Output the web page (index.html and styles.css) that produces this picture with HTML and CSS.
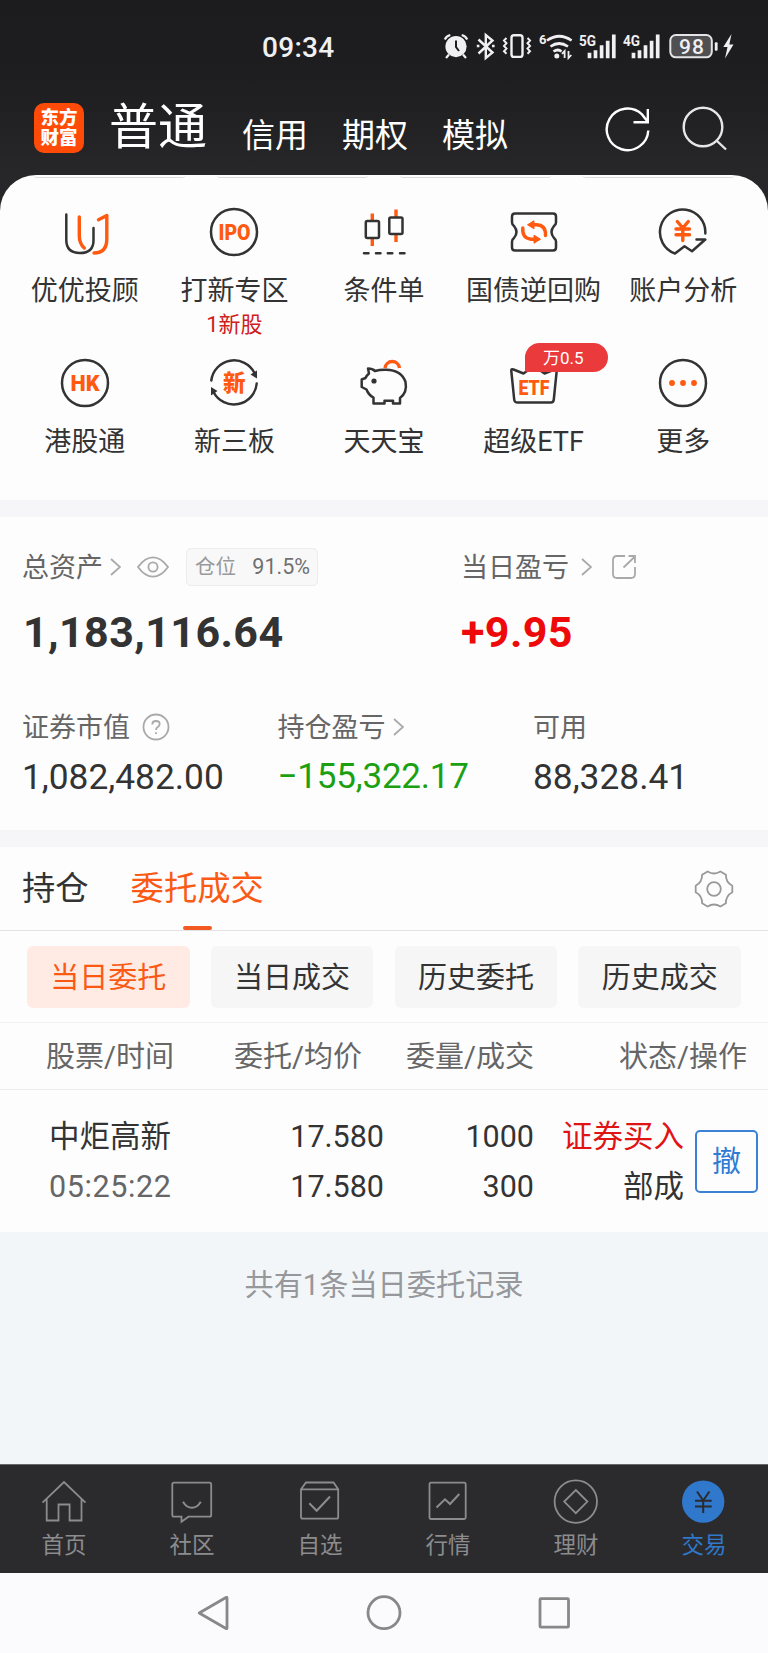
FILE: index.html
```html
<!DOCTYPE html>
<html lang="zh-CN">
<head>
    <meta charset="UTF-8">
    <meta name="viewport" content="width=device-width, initial-scale=1.0">
    <title>交易</title>
    <link rel="stylesheet" href="styles.css">
</head>
<body>
    <div class="top">
        <div class="status-bar">
            <span class="time">09:34</span>
            <svg class="status-icons" width="300" height="32" viewBox="0 0 300 32">
                <!-- alarm -->
                <circle cx="16" cy="16.6" r="10.6" fill="#f0f0f2"/>
                <path d="M16 10.5v6.5l3 4" stroke="#1d1d1f" stroke-width="2" fill="none"/>
                <path d="M4.8 9.5q1.5-3.5 5.5-4.5M27.2 9.5q-1.5-3.5-5.5-4.5M9 24.5l-3 3.4M23 24.5l3 3.4" class="st" stroke-width="2.2"/>
                <!-- bluetooth -->
                <path d="M38.5 9.5l14 13-6.7 5.5v-23l6.7 5.5-14 13M36.8 16h2.6M52 16h2.6" class="st" stroke-width="2.4"/>
                <!-- vibrate -->
                <rect x="71.5" y="5.3" width="11" height="21.6" rx="2.5" class="st" stroke-width="2.4"/>
                <path d="M66.5 8l-2.5 2.5 2.5 2.7-2.5 2.7 2.5 2.7-2.5 2.7 2.5 2.5M87.5 8l2.5 2.5-2.5 2.7 2.5 2.7-2.5 2.7 2.5 2.7-2.5 2.5" class="st" stroke-width="2"/>
                <!-- wifi -->
                <text x="99" y="14" font-size="13" class="stx bold">6</text>
                <path d="M107 10.5q12.3-8.5 24.6 0M110.5 16.5q8.5-6 17.5 0M113.5 21.5q4.5-3 8 0" class="st" stroke-width="2.7"/>
                <circle cx="116.8" cy="26" r="2.5" fill="#f0f0f2"/>
                <path d="M124.6 28v-7l-2.6 2.8M128.5 21v7l2.8-3" class="st" stroke-width="1.8"/>
                <!-- signals -->
                <text x="139" y="16" font-size="15.5" textLength="17" lengthAdjust="spacingAndGlyphs" class="stx bold">5G</text>
                <path d="M149.5 28.3v-5.5M155.5 28.3v-8M161.6 28.3v-13M167.7 28.3v-17.5M173.8 28.3V4.5" stroke="#f0f0f2" stroke-width="3.7"/>
                <text x="183" y="16" font-size="15.5" textLength="17" lengthAdjust="spacingAndGlyphs" class="stx bold">4G</text>
                <path d="M193.5 28.3v-5.5M199.5 28.3v-8M205.5 28.3v-13M211.6 28.3v-17.5M217.7 28.3V4.5" stroke="#f0f0f2" stroke-width="3.7"/>
                <!-- battery -->
                <rect x="230.3" y="5" width="41.5" height="22.3" rx="5.5" fill="#505052" stroke="#e4e4e6" stroke-width="2"/>
                <text x="239" y="23.5" font-size="21" textLength="25" class="stx">98</text>
                <rect x="274.8" y="12.3" width="2.8" height="8.5" rx="1" fill="#f0f0f2"/>
                <path d="M291.5 4l-8.2 13h4.2l-2.5 11.5 8.5-14h-4.2z" fill="#f0f0f2"/>
            </svg>
        </div>
        <div class="header">
            <div class="logo"><span>东方</span><span>财富</span></div>
            <div class="account-tabs">
                <span class="active">普通</span>
                <span>信用</span>
                <span>期权</span>
                <span>模拟</span>
            </div>
            <svg class="refresh" width="48" height="48" viewBox="0 0 48 48" fill="none" stroke="#fff" stroke-width="2.4">
                <path d="M45.3 25.5A20.8 20.8 0 1 1 39 9.4L44.5 16.5M44.8 4v13.3h-14.3"/>
            </svg>
            <svg class="search" width="48" height="48" viewBox="0 0 48 48" fill="none" stroke="#e6e6e6" stroke-width="2.4">
                <circle cx="22" cy="21" r="19.3"/>
                <path d="M35.5 34.5l9.5 9"/>
            </svg>
        </div>
    </div>

    <div class="menu">
        <div class="menu-edge"><i></i><i></i><i></i><i></i></div>
        <div class="menu-grid">
            <div class="menu-item">
                <svg class="icon" viewBox="0 0 50 50">
                    <path class="dk" d="M6.3 7.5V33Q6.3 46 20 46T33.5 33V21"/>
                    <path class="og" d="M19.3 10V29Q19.3 36.5 24.3 41M38.5 12.7L46.8 8.5V32Q46.8 46 34 46"/>
                </svg>
                <span class="label">优优投顾</span>
            </div>
            <div class="menu-item">
                <svg class="icon" viewBox="0 0 50 50">
                    <circle class="dk" cx="25" cy="25" r="23"/>
                    <text x="9.5" y="33" font-size="22" textLength="32" lengthAdjust="spacingAndGlyphs" class="icon-text">IPO</text>
                </svg>
                <span class="label">打新专区</span>
                <span class="note">1新股</span>
            </div>
            <div class="menu-item">
                <svg class="icon" viewBox="0 0 50 50">
                    <path class="og wick" d="M13.3 6.5v7M13.3 31.5v7.5M37 2.5v7.5M37 27.5v7.5"/>
                    <rect class="dk" x="6.8" y="14" width="13.2" height="17" rx="1.5"/>
                    <rect class="dk" x="30.3" y="10.5" width="13.2" height="16.5" rx="1.5"/>
                    <path class="dk" d="M5 46.2h4.5M17 46.2h4.5M28.8 46.2h4.5M41 46.2h4.5"/>
                </svg>
                <span class="label">条件单</span>
            </div>
            <div class="menu-item">
                <svg class="icon" viewBox="0 0 50 50">
                    <path class="dk" d="M6 6.5H44Q47 6.5 47 9.5V15.5Q47 17.5 45 19Q40 25 45 31Q47 32.5 47 34.5V40.5Q47 43.5 44 43.5H6Q3 43.5 3 40.5V34.5Q3 32.5 5 31Q10 25 5 19Q3 17.5 3 15.5V9.5Q3 6.5 6 6.5Z"/>
                    <path class="og" d="M24.5 17.8H28Q37 18.5 36.5 28.5M13.8 21Q13 31.2 22 32.2H25"/>
                    <path fill="#ff5a10" stroke="#ff5a10" stroke-linejoin="round" d="M18.5 17.8L25 13.8V21.8ZM31.5 32.2L25 28.2V36.2Z"/>
                </svg>
                <span class="label">国债逆回购</span>
            </div>
            <div class="menu-item">
                <svg class="icon" viewBox="0 0 50 50">
                    <path class="dk" d="M47.3 26.5A22.7 22.7 0 1 0 17 46.5L26.5 39.3L34 44.3L47.3 32.5H38.5"/>
                    <path class="og" d="M19.3 14.5L24.8 21L30.3 14.5M18 22H31.5M18 27.8H31.5M24.8 21V33.5"/>
                </svg>
                <span class="label">账户分析</span>
            </div>
            <div class="menu-item">
                <svg class="icon" viewBox="0 0 50 50">
                    <circle class="dk" cx="25" cy="25" r="23"/>
                    <text x="10.5" y="32.8" font-size="21.5" textLength="29" lengthAdjust="spacingAndGlyphs" class="icon-text">HK</text>
                </svg>
                <span class="label">港股通</span>
            </div>
            <div class="menu-item">
                <svg class="icon" viewBox="0 0 50 50">
                    <path class="dk" d="M2.3 22.5A22.9 22.9 0 0 1 45.5 15M47.7 25.5A22.9 22.9 0 0 1 4.5 34"/>
                    <path fill="#333" d="M41.5 16.5L48 12.5L48 20.5ZM8.5 33L2 37.5L2 29Z"/>
                    <text x="14" y="32.8" font-size="22.5" class="icon-text">新</text>
                </svg>
                <span class="label">新三板</span>
            </div>
            <div class="menu-item">
                <svg class="icon" viewBox="0 0 50 50">
                    <path class="og arc" d="M26 10A7.3 7.3 0 0 1 40.5 10"/>
                    <path class="dk" d="M9 10.5Q13.5 10.5 16 13Q21 11.5 27 11.7Q42.5 12 46.5 24Q48.5 34.5 41 40V45.5H34V42.8H25.5V45.5H14.5V39.5Q9.5 37 7.5 31.5L2.7 29V21.5L6.5 20Q7.5 17.5 10 15.5Z"/>
                    <circle cx="15" cy="23" r="2.6" fill="#333"/>
                </svg>
                <span class="label">天天宝</span>
            </div>
            <div class="menu-item">
                <svg class="icon" viewBox="0 0 50 50">
                    <path class="dk" d="M2.3 13Q2 10.5 4.5 11.5L14.5 15.5L25 8L35.5 15.5L45.5 11.5Q48 10.5 47.7 13L44.8 41.5Q44.5 44.5 42 44.5H8Q5.5 44.5 5.2 41.5Z"/>
                    <text x="9.5" y="37" font-size="21" textLength="31" lengthAdjust="spacingAndGlyphs" class="icon-text">ETF</text>
                </svg>
                <span class="badge">万0.5</span>
                <span class="label">超级ETF</span>
            </div>
            <div class="menu-item">
                <svg class="icon" viewBox="0 0 50 50">
                    <circle class="dk" cx="25" cy="25" r="23"/>
                    <g fill="#ff5a10"><circle cx="14" cy="25" r="2.9"/><circle cx="25" cy="25" r="2.9"/><circle cx="36" cy="25" r="2.9"/></g>
                </svg>
                <span class="label">更多</span>
            </div>
        </div>
    </div>

    <div class="assets">
        <div class="asset-row total">
            <div class="asset">
                <div class="asset-label"><span>总资产</span>
                    <svg class="chevron" viewBox="0 0 11 18"><path d="M1 1l9 8-9 8"/></svg>
                    <svg class="eye" width="32" height="22" viewBox="0 0 32 22"><path d="M1 11Q8 1.3 16 1.3T31 11Q24 20.7 16 20.7T1 11Z"/><circle cx="16" cy="11" r="4.6"/></svg>
                    <div class="ratio">仓位<b>91.5%</b></div>
                </div>
                <div class="big">1,183,116.64</div>
            </div>
            <div class="asset">
                <div class="asset-label"><span>当日盈亏</span>
                    <svg class="chevron far" viewBox="0 0 11 18"><path d="M1 1l9 8-9 8"/></svg>
                    <svg class="share" width="24" height="24" viewBox="0 0 24 24"><path d="M13 1H5Q1 1 1 5V19Q1 23 5 23H19Q23 23 23 19V12M11.5 12.5L23 1.5M16.5 1H23V8"/></svg>
                </div>
                <div class="big up">+9.95</div>
            </div>
        </div>
        <div class="asset-row detail">
            <div class="asset">
                <div class="asset-label"><span>证券市值</span>
                    <svg class="help" width="28" height="28" viewBox="0 0 28 28"><circle cx="14" cy="14" r="12.5"/><path d="M10.3 11.5Q10.3 8 14 8T17.7 11Q17.7 12.8 15.8 14T14 17M14 19.3V21"/></svg>
                </div>
                <div class="num">1,082,482.00</div>
            </div>
            <div class="asset">
                <div class="asset-label"><span>持仓盈亏</span>
                    <svg class="chevron" viewBox="0 0 11 18"><path d="M1 1l9 8-9 8"/></svg>
                </div>
                <div class="num down">−155,322.17</div>
            </div>
            <div class="asset">
                <div class="asset-label"><span>可用</span></div>
                <div class="num">88,328.41</div>
            </div>
        </div>
    </div>

    <div class="orders">
        <div class="tabs">
            <span class="tab">持仓</span>
            <span class="tab active">委托成交</span>
            <svg class="gear" width="40" height="40" viewBox="-20 -20 40 40">
                <path d="M18.3 -3.2V3.2Q11.7 6.75 11.9 14.2L6.4 17.5Q0 13.5 -6.4 17.5L-11.9 14.2Q-11.7 6.75 -18.3 3.2V-3.2Q-11.7 -6.75 -11.9 -14.2L-6.4 -17.5Q0 -13.5 6.4 -17.5L11.9 -14.2Q11.7 -6.75 18.3 -3.2Z"/>
                <circle r="6.8"/>
            </svg>
        </div>
        <div class="filters">
            <span class="filter active">当日委托</span>
            <span class="filter">当日成交</span>
            <span class="filter">历史委托</span>
            <span class="filter">历史成交</span>
        </div>
        <div class="table-head">
            <span>股票/时间</span>
            <span>委托/均价</span>
            <span>委量/成交</span>
            <span>状态/操作</span>
        </div>
        <div class="order">
            <div class="cell name">中炬高新<small>05:25:22</small></div>
            <div class="cell">17.580<small>17.580</small></div>
            <div class="cell">1000<small>300</small></div>
            <div class="cell buy">证券买入<small>部成</small></div>
            <div class="cancel">撤</div>
        </div>
    </div>

    <div class="summary">共有1条当日委托记录</div>

    <div class="nav">
        <div class="nav-item">
            <svg viewBox="0 0 44 44"><path d="M0.5 22.7L22 2L43.5 22.7M4.7 19V40.5H16.5V24.5H27.6V40.5H39.5V19"/></svg>
            首页
        </div>
        <div class="nav-item">
            <svg viewBox="0 0 44 44"><path d="M4 2.7H39.5Q41.2 2.7 41.2 4.5V35Q41.2 36.7 39.5 36.7H18.5L11.5 41.7V36.7H4Q2.3 36.7 2.3 35V4.5Q2.3 2.7 4 2.7Z"/><path class="thick" d="M13 21.7Q16.5 27.7 21.9 27.7T30.8 21.7"/></svg>
            社区
        </div>
        <div class="nav-item">
            <svg viewBox="0 0 44 44"><path d="M3 9.3L8 2.5H35.5L40.2 9.3V37Q40.2 38.7 38.5 38.7H4.7Q3 38.7 3 37ZM3 9.3H40.2"/><path class="thick" d="M11.3 23.3L18.7 30.7L32 16.5"/></svg>
            自选
        </div>
        <div class="nav-item">
            <svg viewBox="0 0 44 44"><rect x="3.5" y="2.7" width="36.2" height="36.3" rx="1.5"/><path class="thick" d="M10.5 27.5L19 19.3L24 24L33.3 14"/></svg>
            行情
        </div>
        <div class="nav-item">
            <svg viewBox="0 0 44 44"><circle cx="21.8" cy="21.6" r="21.2"/><path d="M21.8 10L33.4 21.6L21.8 33.2L10.2 21.6Z"/></svg>
            理财
        </div>
        <div class="nav-item active">
            <svg viewBox="0 0 44 44"><circle cx="21.2" cy="21.6" r="21.2" class="coin"/><path d="M15 11.5L21.2 20.5L27.4 11.5M13 20.7H29.7M13 26.5H29.7M21.2 20.5V33"/></svg>
            交易
        </div>
    </div>

    <div class="system-bar">
        <svg viewBox="0 0 40 40"><path d="M6.2 20L33 4.5Q34 4 34 5V35Q34 36 33 35.5Z"/></svg>
        <svg viewBox="0 0 40 40"><circle cx="20" cy="19.7" r="16"/></svg>
        <svg viewBox="0 0 40 40"><rect x="5" y="5.7" width="28.5" height="28.5" rx="1"/></svg>
    </div>
</body>
</html>
```
FILE: styles.css
```css
* {
    box-sizing: border-box;
}

body {
    margin: 0;
    width: 768px;
    height: 1653px;
    display: flex;
    flex-direction: column;
    font-family: Roboto, "Noto Sans CJK SC", sans-serif;
    color: #333;
    background: #f3f6f8;
    overflow: hidden;
}

svg {
    display: block;
    flex-shrink: 0;
}

.top {
    height: 211px;
    background: linear-gradient(#1c1c1e, #1e1e20 80px, #272729 175px);
    color: #fff;
}

.status-bar {
    display: flex;
    height: 92px;
    padding: 30px 28px 0 262px;
    justify-content: space-between;
}

.time {
    font-size: 28px;
    font-weight: 500;
    line-height: 36px;
    letter-spacing: 0.3px;
    color: #f0f0f2;
}

.st {
    fill: none;
    stroke: #f0f0f2;
}

.stx {
    fill: #f0f0f2;
    font-weight: 500;
}

.stx.bold {
    font-weight: 700;
}

.header {
    display: flex;
    align-items: center;
    height: 72px;
    padding: 0 39px 0 34px;
}

.logo {
    display: flex;
    flex-direction: column;
    justify-content: center;
    align-items: center;
    width: 50px;
    height: 50px;
    border-radius: 10px;
    background: #ff4a08;
    font-size: 18.5px;
    font-weight: 900;
    line-height: 20px;
}

.account-tabs {
    display: flex;
    flex: 1;
    align-items: flex-start;
    margin: 16px 0 0 25px;
    gap: 34px;
    font-size: 33px;
    line-height: 78px;
}

.account-tabs .active {
    font-size: 49px;
    line-height: 62px;
    margin-right: 1px;
}

.refresh {
    margin: 2px 30px 0 0;
}

.search {
    margin-top: 3px;
}

/* quick menu */
.menu {
    height: 325px;
    margin-top: -36px;
    border-radius: 36px 36px 0 0;
    background: #fdfdfe;
}

.menu-edge {
    display: flex;
    gap: 32px;
    height: 3px;
    padding: 0 34px;
}

.menu-edge i {
    flex: 1;
    border-bottom: 1px solid #dcdcde;
    border-radius: 0 0 8px 8px;
}

.menu-grid {
    display: grid;
    grid-template-columns: repeat(5, 1fr);
    grid-auto-rows: 151px;
    padding: 28.5px 10px 0;
}

.menu-item {
    position: relative;
    display: flex;
    flex-direction: column;
    align-items: center;
    white-space: nowrap;
}

.icon {
    width: 50px;
    height: 50px;
}

.dk,
.og {
    fill: none;
    stroke: #333;
    stroke-width: 2.5;
    stroke-linejoin: round;
    stroke-linecap: round;
}

.og {
    stroke: #ff5a10;
    stroke-width: 3.4;
}

.og.arc,
.og.wick {
    stroke-linecap: butt;
}

.icon-text {
    fill: #ff5a10;
    font-weight: 900;
}

.label {
    margin-top: 16px;
    font-size: 27px;
    line-height: 36px;
}

.note {
    font-size: 22px;
    line-height: 31px;
    color: #d0201c;
}

.badge {
    position: absolute;
    left: 66px;
    top: -14.5px;
    width: 83px;
    height: 29px;
    padding-right: 6px;
    border-radius: 15px 15px 15px 2px;
    background: #ea3a3b;
    color: #fff;
    font-size: 17px;
    line-height: 30px;
    text-align: center;
}

/* assets */
.assets {
    height: 347px;
    border: solid #f6f6f8;
    border-width: 17px 0;
    padding: 28px 0 0 22px;
    background: #fdfdfe;
}

.asset-row {
    display: flex;
}

.asset {
    flex-shrink: 0;
}

.asset-label {
    display: flex;
    align-items: center;
    height: 44px;
    font-size: 27px;
    line-height: 36px;
    color: #666;
}

.asset-label span {
    margin-top: 2px;
}

.asset-label svg {
    fill: none;
    stroke: #a9a9a9;
    stroke-width: 1.8;
}

.total .asset {
    width: 439px;
}

.total .asset:last-child {
    width: auto;
}

.detail .asset {
    width: 255.5px;
}

.detail .asset:last-child {
    width: auto;
}

.chevron {
    width: 11px;
    height: 18px;
    margin-left: 7px;
}

.chevron.far {
    margin-left: 12px;
}

.eye {
    margin-left: 16px;
}

.share {
    margin-left: 20px;
}

.help {
    margin-left: 12px;
}

.ratio {
    display: flex;
    align-items: center;
    justify-content: space-between;
    width: 132px;
    height: 38px;
    margin-left: 17px;
    padding: 0 7px 0 8px;
    border: 1px solid #ececec;
    border-radius: 5px;
    background: #f8f8f9;
    font-size: 20.5px;
    color: #999;
}

.ratio b {
    font-size: 21.5px;
    font-weight: 400;
    color: #707070;
}

.big {
    margin-top: 18px;
    padding-left: 1px;
    font-size: 43px;
    font-weight: 700;
    line-height: 50px;
    letter-spacing: 0.4px;
}

.up {
    padding-left: 0;
    color: #ee0a0a;
}

.detail {
    margin-top: 48px;
}

.num {
    margin-top: 6px;
    font-size: 35.3px;
    line-height: 44px;
    white-space: nowrap;
}

.down {
    color: #1ba012;
    font-size: 35px;
    letter-spacing: -0.2px;
}

/* orders */
.orders {
    height: 385px;
    background: #fdfdfe;
}

.tabs {
    display: flex;
    align-items: center;
    height: 84px;
    padding: 0 34px 0 22px;
    gap: 42px;
    border-bottom: 1px solid #e2e2e4;
    font-size: 33.3px;
    line-height: 83px;
}

.tab.active {
    position: relative;
    color: #fa5a14;
}

.tab.active::after {
    content: "";
    position: absolute;
    left: 52px;
    bottom: 0;
    width: 29px;
    height: 4px;
    border-radius: 2px;
    background: #f25a22;
}

.gear {
    margin-left: auto;
    fill: none;
    stroke: #999;
    stroke-width: 1.8;
    stroke-linejoin: round;
}

.filters {
    display: flex;
    gap: 21.3px;
    height: 92px;
    padding: 15px 27px 0;
    border-bottom: 1px solid #f2f2f3;
}

.filter {
    flex: 1;
    height: 62px;
    border-radius: 6px;
    background: #f6f6f7;
    font-size: 29px;
    line-height: 64px;
    text-align: center;
}

.filter.active {
    background: #ffebe4;
    color: #fa5a14;
}

.table-head {
    display: grid;
    grid-template-columns: 234px 172px 128px 1fr;
    height: 67px;
    border-bottom: 1px solid #ececee;
    font-size: 29px;
    line-height: 69px;
    color: #666;
    text-align: right;
    white-space: nowrap;
}

.table-head span:first-child {
    padding-left: 46px;
    text-align: left;
}

.table-head span:nth-child(2) {
    text-align: left;
}

.table-head span:last-child {
    padding-right: 21px;
}

.order {
    display: grid;
    grid-template-columns: 234px 150px 150px 150px 63px;
    align-items: center;
    height: 142px;
}

.cell {
    padding-top: 2px;
    font-size: 30.5px;
    line-height: 50px;
    text-align: right;
}

.cell small {
    display: block;
    font-size: inherit;
    color: #333;
}

.cell.name {
    padding-left: 49px;
    text-align: left;
}

.cell.name small {
    letter-spacing: 0.6px;
    color: #666;
}

.buy {
    color: #e01414;
}

.cancel {
    width: 63px;
    height: 63px;
    margin-left: 11px;
    border: 2px solid #3b82d6;
    border-radius: 5px;
    color: #2f7bd4;
    font-size: 29px;
    line-height: 60px;
    text-align: center;
}

.summary {
    height: 232px;
    padding-top: 32px;
    font-size: 29.2px;
    line-height: 42px;
    color: #96989b;
    text-align: center;
}

/* bottom navigation */
.nav {
    display: flex;
    height: 109px;
    padding-top: 15px;
    border-top: 1px solid #68686a;
    background: #2b2b2d;
}

.nav-item {
    display: flex;
    flex: 1;
    flex-direction: column;
    align-items: center;
    gap: 5px;
    font-size: 22.5px;
    line-height: 32px;
    color: #8c8c8e;
}

.nav-item svg {
    width: 44px;
    height: 44px;
    fill: none;
    stroke: #8c8c8e;
    stroke-width: 1.8;
    overflow: visible;
}

.nav-item .thick {
    stroke-width: 2;
}

.nav-item.active {
    color: #2f78cc;
}

.nav-item .coin {
    fill: #2f78cc;
    stroke: none;
}

.nav-item.active svg {
    stroke: #2b2b2d;
    stroke-width: 2;
}

.system-bar {
    display: flex;
    justify-content: center;
    gap: 131px;
    flex: 1;
    padding-top: 20px;
    background: #fbfbfd;
}

.system-bar svg {
    width: 40px;
    height: 40px;
    fill: none;
    stroke: #888;
    stroke-width: 2.8;
    stroke-linejoin: round;
}
```
